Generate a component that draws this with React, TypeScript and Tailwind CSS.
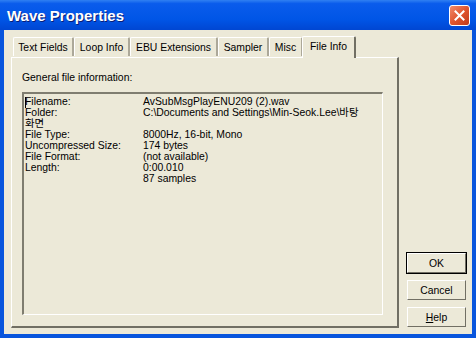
import React from 'react';

const tabs: [string, string][] = [
  ['Text Fields', 'w-[61px]'],
  ['Loop Info', 'w-[56px]'],
  ['EBU Extensions', 'w-[88px]'],
  ['Sampler', 'w-[51px]'],
  ['Misc', 'w-[34px]'],
];

const rows: [string, string][] = [
  ['Filename:', 'AvSubMsgPlayENU209 (2).wav'],
  ['Folder:', 'C:\\Documents and Settings\\Min-Seok.Lee\\바탕'],
  ['화면', ''],
  ['File Type:', '8000Hz, 16-bit, Mono'],
  ['Uncompressed Size:', '174 bytes'],
  ['File Format:', '(not available)'],
  ['Length:', '0:00.010'],
  ['', '87 samples'],
];

const font = { fontFamily: '"Liberation Sans", "Noto Sans CJK KR", sans-serif' };

const XpButton: React.FC<{ children: React.ReactNode; isDefault?: boolean }> = ({ children, isDefault }) => (
  <button
    className={`w-[61px] h-[22px] bg-[#ECE9D8] text-[10.4px] leading-[11px] text-black border ${
      isDefault ? 'border-black' : 'border-transparent'
    }`}
  >
    <div className="w-full h-full border-t border-l border-white border-r border-b border-r-[#716F64] border-b-[#716F64] flex items-center justify-center">
      {children}
    </div>
  </button>
);

const App: React.FC = () => {
  return (
    <div className="w-[476px] h-[338px] bg-[#0855DD] flex flex-col text-black" style={font}>
      {/* Title bar */}
      <div className="h-[30px] flex items-center justify-between pl-[7px] pr-[6px] bg-[linear-gradient(to_bottom,#3080F2_0%,#0A5CEC_12%,#0055E6_65%,#0046D2_100%)]">
        <span className="text-white font-bold text-[15px] leading-none [text-shadow:1px_1px_0_#0A1E78]">Wave Properties</span>
        <div className="w-[21px] h-[21px] rounded-[3px] border border-white bg-gradient-to-br from-[#F08A6A] via-[#E0552E] to-[#C03A1A] flex items-center justify-center">
          <svg width="11" height="11" viewBox="0 0 11 11">
            <path d="M1.5 1.5 L9.5 9.5 M9.5 1.5 L1.5 9.5" stroke="white" strokeWidth="2" strokeLinecap="square" />
          </svg>
        </div>
      </div>

      {/* Client area */}
      <div className="flex-1 mx-[4px] mb-[4px] bg-[#ECE9D8] flex pl-[7px] pt-[6px] pb-[6px] pr-[5px]">
        <div className="flex flex-col w-[388px]">
          {/* Tabs */}
          <div className="flex items-end h-[21px] pl-[2px] relative z-10">
            {tabs.map(([t, w]) => (
              <div
                key={t}
                className={`${w} h-[19px] flex items-center justify-center text-[10.4px] leading-[11px] border-t border-l border-white border-r-[2px] border-r-[#ACA899] rounded-t-[2px] mb-[1px]`}
              >
                {t}
              </div>
            ))}
            <div className="w-[54px] h-[22px] -mb-px ml-[-1px] pb-[3px] flex items-center justify-center text-[10.4px] leading-[11px] bg-[#ECE9D8] border-t border-l border-white border-r-[2px] border-r-[#716F64] rounded-t-[2px]">
              File Info
            </div>
          </div>

          {/* Panel */}
          <div className="h-[271px] border-t border-l border-white border-r-[2px] border-b-[2px] border-r-[#716F64] border-b-[#716F64] pl-[10px] pt-[13px] flex flex-col">
            <div className="text-[10.4px] leading-[13px] h-[13px]">General file information:</div>
            <div className="mt-[8px] w-[361px] h-[223px] border-t-2 border-l-2 border-t-[#7F7D70] border-l-[#7F7D70] border-b border-r border-b-white border-r-white pt-[2px] pl-[1px] text-[10.4px] leading-[11px] relative">
              <div className="absolute left-[1px] top-[3px] w-px h-[11px] bg-black" />
              {rows.map(([k, v], i) => (
                <div key={i} className="flex h-[11px] whitespace-nowrap">
                  <span className="w-[118px]">{k}</span>
                  <span>{v}</span>
                </div>
              ))}
            </div>
          </div>
        </div>

        {/* Buttons */}
        <div className="ml-[7px] flex flex-col justify-end gap-[5px]">
          <XpButton isDefault>OK</XpButton>
          <XpButton>Cancel</XpButton>
          <XpButton>
            <span>
              <span className="underline">H</span>elp
            </span>
          </XpButton>
        </div>
      </div>
    </div>
  );
};

export default App;
